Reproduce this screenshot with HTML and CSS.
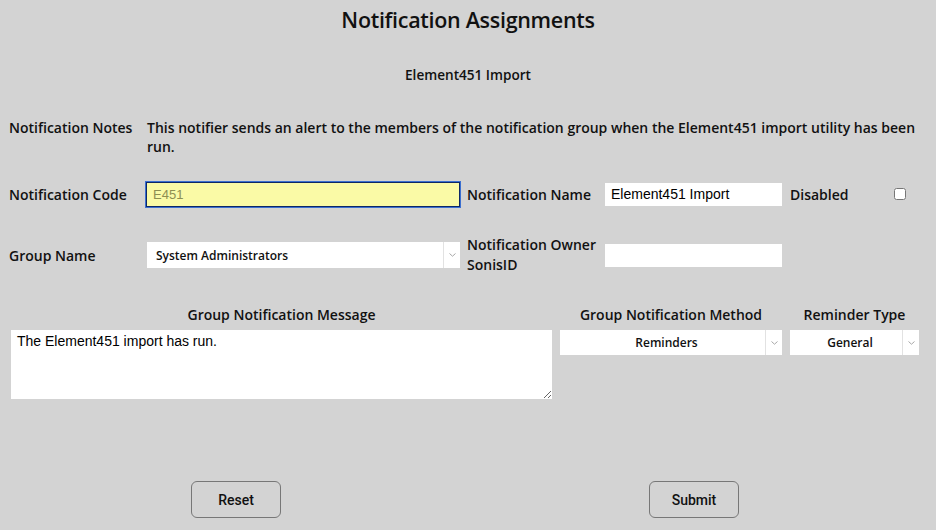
FILE: index.html
```html
<!DOCTYPE html>
<html>
<head>
<meta charset="utf-8">
<link rel="stylesheet" href="styles.css">
</head>
<body>
<h1 class="title">Notification Assignments</h1>
<h2 class="subtitle">Element451 Import</h2>

<div class="notes-row">
  <div class="label">Notification Notes</div>
  <div class="notes-text">This notifier sends an alert to the members of the notification group when the Element451 import utility has been run.</div>
</div>

<div class="form-grid">
  <div class="label">Notification Code</div>
  <div><input class="code-input" type="text" value="E451"></div>
  <div class="label">Notification Name</div>
  <div><input class="text-input" type="text" value="Element451 Import"></div>
  <div class="label">Disabled</div>
  <div class="check-cell"><input type="checkbox" class="check"></div>

  <div class="label">Group Name</div>
  <div class="select select-group">
    <span class="select-text">System Administrators</span>
    <span class="select-arrow"><svg width="7" height="4" viewBox="0 0 7 4"><path d="M0.5 0.5 L3.5 3.2 L6.5 0.5" fill="none" stroke="#a8a8a8" stroke-width="1"/></svg></span>
  </div>
  <div class="label label-two">Notification Owner SonisID</div>
  <div><input class="text-input" type="text" value=""></div>
  <div></div>
  <div></div>
</div>

<div class="message-grid">
  <div class="col-label">Group Notification Message</div>
  <div class="col-label">Group Notification Method</div>
  <div class="col-label">Reminder Type</div>
  <textarea class="message">The Element451 import has run.</textarea>
  <div class="select select-center">
    <span class="select-text">Reminders</span>
    <span class="select-arrow"><svg width="7" height="4" viewBox="0 0 7 4"><path d="M0.5 0.5 L3.5 3.2 L6.5 0.5" fill="none" stroke="#a8a8a8" stroke-width="1"/></svg></span>
  </div>
  <div class="select select-center">
    <span class="select-text">General</span>
    <span class="select-arrow"><svg width="7" height="4" viewBox="0 0 7 4"><path d="M0.5 0.5 L3.5 3.2 L6.5 0.5" fill="none" stroke="#a8a8a8" stroke-width="1"/></svg></span>
  </div>
</div>

<div class="buttons">
  <button class="btn" type="button">Reset</button>
  <button class="btn" type="button">Submit</button>
</div>
</body>
</html>
```

FILE: styles.css
```css
html, body {
  margin: 0;
  padding: 0;
  background: #d3d3d3;
}
body {
  width: 936px;
  height: 530px;
  overflow: hidden;
  font-family: "Open Sans", Lato, sans-serif;
  font-weight: 600;
  color: #111;
  font-size: 14px;
}
.title {
  margin: 0;
  padding-top: 7px;
  font-size: 21.5px;
  line-height: 26px;
  text-align: center;
  font-weight: 600;
  letter-spacing: -0.3px;
}
.subtitle {
  margin: 33px 0 0 0;
  font-size: 13.6px;
  line-height: 18px;
  text-align: center;
  font-weight: 600;
}
.notes-row {
  display: grid;
  grid-template-columns: 138px 1fr;
  margin: 34px 20px 0 9px;
  line-height: 19px;
}
.label {
  line-height: 19px;
}
.label-two {
  line-height: 20px;
}
.form-grid {
  display: grid;
  grid-template-columns: 137px 321px 138px 185px 104px 30px;
  grid-template-rows: 26px 40px;
  row-gap: 28px;
  align-items: center;
  margin: 25px 0 0 9px;
}
.code-input {
  box-sizing: border-box;
  width: 314px;
  height: 25px;
  margin: 0;
  padding: 0 6px;
  border: 1px solid #0d2766;
  outline: 1px solid #3b6fd0;
  outline-offset: 0;
  background: #fafaa6;
  color: #8e8e52;
  font-family: "Liberation Sans", Arial, sans-serif;
  font-size: 13px;
  font-weight: 400;
}
.text-input {
  box-sizing: border-box;
  width: 177px;
  height: 23px;
  margin: 0;
  padding: 0 6px;
  border: none;
  background: #fff;
  color: #000;
  font-family: "Liberation Sans", Arial, sans-serif;
  font-size: 14px;
  font-weight: 400;
}
.check-cell {
  display: flex;
  align-items: center;
}
.check {
  margin: 0;
  width: 12px;
  height: 12px;
}
.select {
  box-sizing: border-box;
  display: flex;
  align-items: stretch;
  background: #fff;
  height: 26px;
  font-size: 12px;
}
.select-group {
  width: 313px;
  margin-left: 1px;
}
.select-text {
  flex: 1;
  display: flex;
  align-items: center;
  padding-left: 9px;
}
.select-center {
  height: 25px;
}
.select-center .select-text {
  justify-content: center;
  padding-left: 8px;
}
.select-arrow {
  width: 16px;
  border-left: 1px solid #e2e2e2;
  display: flex;
  align-items: center;
  justify-content: center;
}
.message-grid {
  display: grid;
  grid-template-columns: 541px 222px 129px;
  column-gap: 8px;
  row-gap: 6px;
  margin: 31px 0 0 11px;
}
.col-label {
  text-align: center;
  line-height: 18px;
}
.message {
  box-sizing: border-box;
  width: 541px;
  height: 69px;
  margin: 0;
  padding: 3px 6px;
  border: none;
  background: #fff;
  color: #000;
  font-family: "Liberation Sans", Arial, sans-serif;
  font-size: 14px;
  font-weight: 400;
  resize: both;
}
.buttons {
  display: flex;
  gap: 368px;
  margin: 82px 0 0 191px;
}
.btn {
  box-sizing: border-box;
  width: 90px;
  height: 37px;
  margin: 0;
  background: #d3d3d3;
  border: 1px solid #777;
  border-radius: 6px;
  font-family: Roboto, sans-serif;
  font-size: 14px;
  font-weight: 500;
  color: #111;
}
```
